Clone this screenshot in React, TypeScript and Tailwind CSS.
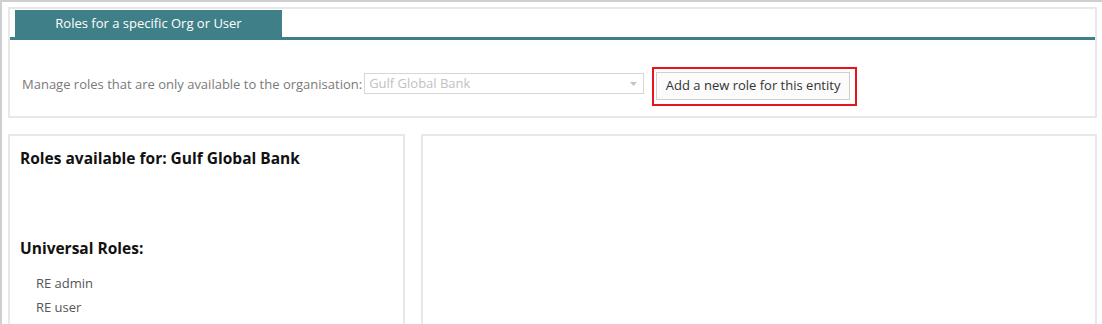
import React from "react";

export default function App() {
  const font = { fontFamily: '"Open Sans", "Noto Sans", sans-serif' };
  return (
    <div
      className="w-[1102px] h-[324px] overflow-hidden bg-white border-t-2 border-l-2 border-[#cfcfcf]"
      style={font}
    >
      <div className="ml-[6px] mt-[5px] w-[1089px] h-[111px] border-2 border-[#e8e8e8] flex flex-col">
        <div className="pl-[5px] pt-[1px]">
          <div className="w-[267px] h-[27px] bg-[#3f8088] text-white text-[13px] flex items-center justify-center">
            Roles for a specific Org or User
          </div>
        </div>
        <div className="h-[3px] bg-[#3f7f87]" />
        <div className="flex items-start pl-[12px] pt-[27px]">
          <span className="text-[13px] text-[#7a7a7a] mt-[7px] leading-[20px]">
            Manage roles that are only available to the organisation:
          </span>
          <div className="ml-[2px] mt-[6px] w-[280px] h-[21px] border border-[#d6d6d6] flex items-center justify-between pl-[4px] pr-[6px]">
            <span className="text-[13px] text-[#c2c2c2]">Gulf Global Bank</span>
            <svg width="7" height="4" viewBox="0 0 7 4">
              <path d="M0 0 L7 0 L3.5 4 Z" fill="#c4c4c4" />
            </svg>
          </div>
          <div className="ml-[8px] w-[205px] h-[39px] border-2 border-[#e8141b] pl-[2px] pt-[3px]">
            <div className="w-[194px] h-[28px] border border-[#cfcfcf] bg-[#fbfbfb] text-[13px] text-[#333] flex items-center justify-center">
              Add a new role for this entity
            </div>
          </div>
        </div>
      </div>
      <div className="flex ml-[6px] mt-[16px] gap-[16px]">
        <div className="w-[397px] h-[220px] border-2 border-[#e8e8e8] pl-[10px] pt-[11px]">
          <div className="text-[15.5px] font-bold text-[#111] leading-[22px]">
            Roles available for: Gulf Global Bank
          </div>
          <div className="text-[15.5px] font-bold text-[#111] leading-[22px] mt-[68px]">
            Universal Roles:
          </div>
          <div className="pl-[16px] mt-[12px] text-[13px] text-[#555] leading-[24px]">
            <div>RE admin</div>
            <div>RE user</div>
          </div>
        </div>
        <div className="w-[676px] h-[220px] border-2 border-[#e8e8e8]" />
      </div>
    </div>
  );
}
